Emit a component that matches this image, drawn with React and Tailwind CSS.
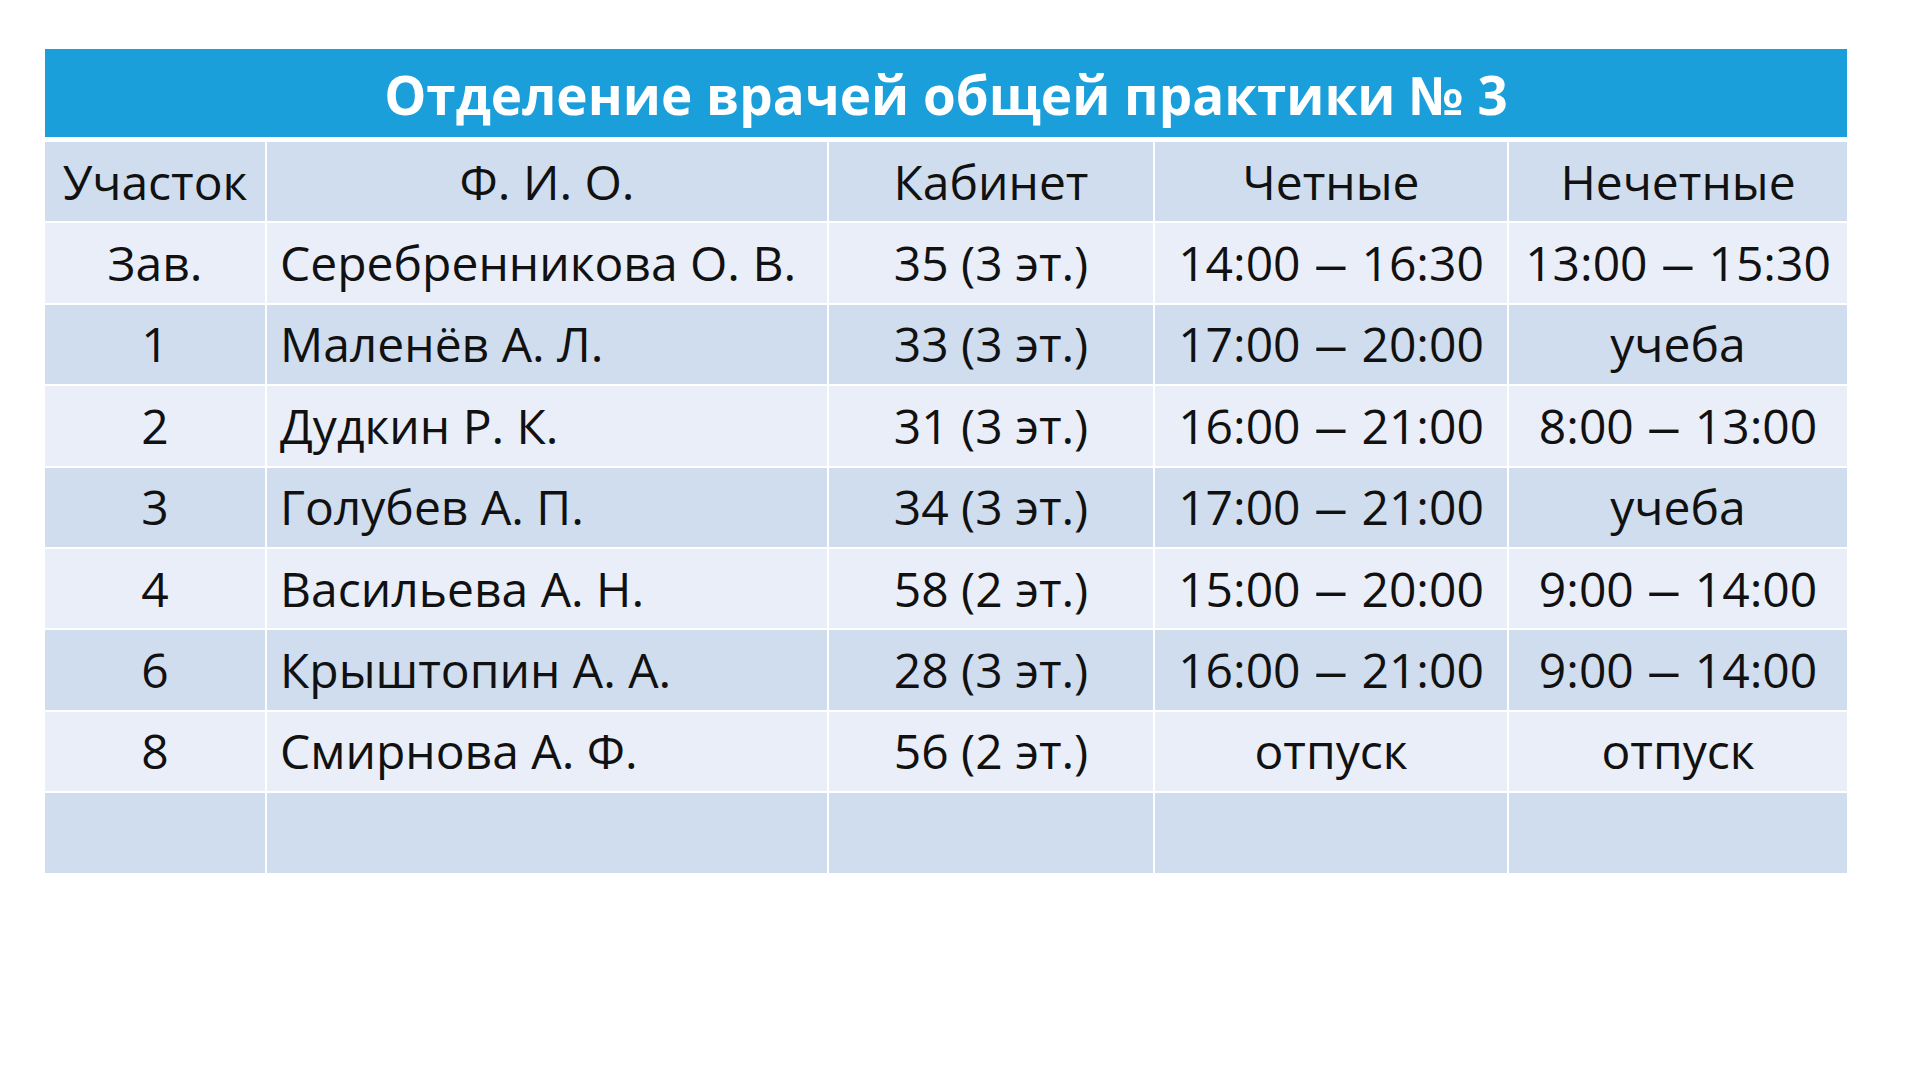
import React from "react";

const rows = [
  ["Зав.", "Серебренникова О. В.", "35 (3 эт.)", "14:00 – 16:30", "13:00 – 15:30"],
  ["1", "Маленёв А. Л.", "33 (3 эт.)", "17:00 – 20:00", "учеба"],
  ["2", "Дудкин Р. К.", "31 (3 эт.)", "16:00 – 21:00", "8:00 – 13:00"],
  ["3", "Голубев А. П.", "34 (3 эт.)", "17:00 – 21:00", "учеба"],
  ["4", "Васильева А. Н.", "58 (2 эт.)", "15:00 – 20:00", "9:00 – 14:00"],
  ["6", "Крыштопин А. А.", "28 (3 эт.)", "16:00 – 21:00", "9:00 – 14:00"],
  ["8", "Смирнова А. Ф.", "56 (2 эт.)", "отпуск", "отпуск"],
  ["", "", "", "", ""],
];

function Cell({ text }) {
  if (text.includes(" – ")) {
    const [a, b] = text.split(" – ");
    return (
      <span className="whitespace-nowrap">
        {a}{" "}
        <span className="inline-block scale-x-[1.45] mx-[6px]">–</span>
        {" "}{b}
      </span>
    );
  }
  return <span className="whitespace-nowrap">{text}</span>;
}

function Row({ cells, dark, header }) {
  const bg = dark ? "bg-[#cfddee]" : "bg-[#e9eef8]";
  return (
    <div className="flex gap-[2px] h-[79.4px]">
      {cells.map((c, i) => (
        <div
          key={i}
          className={
            bg +
            " flex items-center " +
            (i === 1 && !header ? "justify-start pl-[13px]" : "justify-center") +
            " " +
            ["w-[220px]", "w-[560px]", "w-[324px]", "w-[352px]", "w-[338px]"][i]
          }
        >
          <Cell text={c} />
        </div>
      ))}
    </div>
  );
}

export default function App() {
  return (
    <div
      className="w-[1920px] h-[1080px] bg-white text-[#111] text-[48px]"
      style={{ fontFamily: '"Open Sans", "Noto Sans", sans-serif' }}
    >
      <div className="pt-[49px] pl-[45px] w-[1847px] flex flex-col">
        <div className="h-[88px] bg-[#1b9fda] flex items-center justify-center text-white font-bold text-[53px] pt-[3px]">
          Отделение врачей общей практики № 3
        </div>
        <div className="flex flex-col gap-[2px] mt-[5px]">
          <Row header dark cells={["Участок", "Ф. И. О.", "Кабинет", "Четные", "Нечетные"]} />
          {rows.map((r, i) => (
            <Row key={i} cells={r} dark={i % 2 === 1} />
          ))}
        </div>
      </div>
    </div>
  );
}
